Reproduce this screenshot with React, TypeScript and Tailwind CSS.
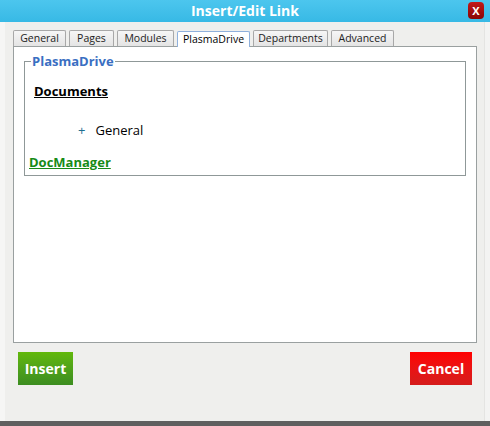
import React from "react";

const tabs = [
  { label: "General", w: 53 },
  { label: "Pages", w: 45 },
  { label: "Modules", w: 57 },
  { label: "PlasmaDrive", w: 73, active: true },
  { label: "Departments", w: 75 },
  { label: "Advanced", w: 63 },
];

export default function App() {
  const font = { fontFamily: '"Open Sans", "Noto Sans", "DejaVu Sans", sans-serif' };
  return (
    <div className="w-[490px] h-[426px] flex flex-col bg-[#efefed] overflow-hidden" style={font}>
      <div className="relative h-[22px] bg-gradient-to-b from-[#4cc6ee] to-[#37b9e5] flex items-center justify-center">
        <span className="text-white font-bold text-[14px] leading-none">Insert/Edit Link</span>
        <div className="absolute right-[6px] top-[2px] w-[16px] h-[17px] rounded-[4px] bg-gradient-to-b from-[#c21818] to-[#8a0606] flex items-center justify-center">
          <span className="text-white font-bold text-[11px] leading-none">X</span>
        </div>
      </div>
      <div className="flex-1 flex">
        <div className="w-[5px] bg-[#f6f6f5]" />
        <div className="flex-1 flex flex-col pl-[8px] pr-[2px]">
          <div className="flex items-end pt-[8px] h-[16px] box-content">
            {tabs.map((t, i) => (
              <div
                key={t.label}
                className={
                  t.active
                    ? "h-[16px] bg-white border border-[#8fb0dc] border-b-0 rounded-t-[2px] flex items-center justify-center text-[10.5px] text-black relative top-[1px]"
                    : "h-[16px] bg-gradient-to-b from-[#f6f6f6] to-[#e4e4e4] border border-[#a8a8a8] border-b-0 rounded-t-[2px] flex items-center justify-center text-[10.5px] text-[#222]"
                }
                style={{ width: t.w, marginRight: i === 5 ? 0 : 3 }}
              >
                {t.label}
              </div>
            ))}
          </div>
          <div className="h-[297px] w-[464px] bg-white border border-[#9aa0a0] pt-[7px] px-[10px]">
            <fieldset className="border border-[#8f9898] h-[122px] pl-[4px] pr-[8px] m-0">
              <legend className="text-[#3a6fc2] font-bold text-[13px] leading-[14px] px-[1px] ml-[2px]">PlasmaDrive</legend>
              <div className="flex flex-col">
                <a className="mt-[15px] ml-[5px] font-bold text-[13px] text-black underline leading-[16px] w-fit">Documents</a>
                <div className="mt-[23px] ml-[49px] flex items-center text-[13px] leading-[16px]">
                  <span className="text-[#1f6f8f] mr-[10px]">+</span>
                  <span className="text-black">General</span>
                </div>
                <a className="mt-[16px] font-bold text-[13px] text-[#178b17] underline leading-[16px] w-fit">DocManager</a>
              </div>
            </fieldset>
          </div>
          <div className="flex justify-between pt-[9px] pl-[5px] pr-[10px]">
            <button className="w-[55px] h-[33px] bg-gradient-to-b from-[#62b80a] to-[#3c8d20] text-white font-bold text-[14px]">Insert</button>
            <button className="w-[62px] h-[33px] bg-gradient-to-b from-[#ff0000] to-[#d51c1c] text-white font-bold text-[14px]">Cancel</button>
          </div>
        </div>
        <div className="w-[6px] bg-[#f3f3f2] border-l border-[#e4e4e2]" />
      </div>
      <div className="h-[5px] bg-[#5f5f5f]" />
    </div>
  );
}
